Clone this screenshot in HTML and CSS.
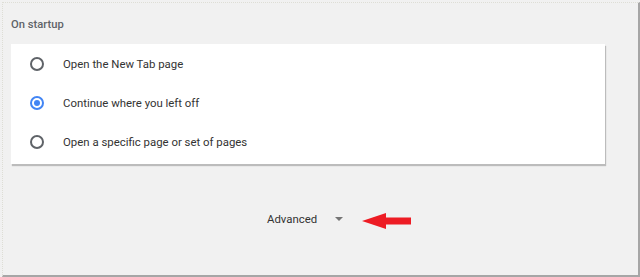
FILE: index.html
```html
<!DOCTYPE html>
<html lang="en">
<head>
    <meta charset="UTF-8">
    <title>Settings - On startup</title>
    <link rel="stylesheet" href="styles.css">
</head>
<body>
    <div class="frame">
        <h2 class="section_title">On startup</h2>
        <div class="card">
            <label class="option">
                <span class="radio"></span>
                <span>Open the New Tab page</span>
            </label>
            <label class="option">
                <span class="radio checked"></span>
                <span>Continue where you left off</span>
            </label>
            <label class="option">
                <span class="radio"></span>
                <span>Open a specific page or set of pages</span>
            </label>
        </div>
        <div class="advanced">
            <span class="adv_text">Advanced</span>
            <span class="caret"></span>
            <svg class="arrow" width="50" height="18" viewBox="0 0 50 18">
                <polygon points="0,9 24,1 24,5.5 49,5.5 49,12.5 24,12.5 24,17" fill="#ed1c24"/>
            </svg>
        </div>
    </div>
</body>
</html>
```

FILE: styles.css
```css
* {
    margin: 0px;
    padding: 0px;
    box-sizing: border-box;
}

body {
    width: 640px;
    height: 277px;
    background-color: #f1f1f1;
    font-family: Roboto, "Liberation Sans", Arial, sans-serif;
    overflow: hidden;
}

.frame {
    margin: 2px 0 0 2px;
    width: 638px;
    height: 275px;
    border-top: 1px dotted #deded6;
    border-left: 1px dotted #deded6;
    border-right: 2px solid #a6a6a6;
    border-bottom: 2px solid #a6a6a6;
    padding: 13px 0 0 8px;
}

.section_title {
    font-size: 11.2px;
    font-weight: 500;
    color: #5f6368;
    line-height: 18px;
    margin-bottom: 10px;
}

.card {
    width: 594px;
    height: 120px;
    background-color: #fff;
    box-shadow: 1px 2px 1px rgba(0, 0, 0, 0.22);
}

.option {
    display: flex;
    align-items: center;
    height: 39px;
    padding-left: 19px;
    font-size: 11.4px;
    color: #333;
}

.radio {
    width: 14px;
    height: 14px;
    border: 2px solid #5f6368;
    border-radius: 50%;
    margin-right: 19px;
    position: relative;
}

.radio.checked {
    border-color: #4285f4;
}

.radio.checked::after {
    content: "";
    position: absolute;
    left: 2px;
    top: 2px;
    width: 6px;
    height: 6px;
    border-radius: 50%;
    background-color: #4285f4;
}

.advanced {
    display: flex;
    align-items: center;
    margin-top: 44px;
    padding-left: 256px;
    font-size: 11.4px;
    color: #333;
}

.caret {
    width: 0;
    height: 0;
    border-left: 4px solid transparent;
    border-right: 4px solid transparent;
    border-top: 4px solid #757575;
    margin-left: 18px;
    margin-right: 19px;
}

.arrow {
    margin-top: 4px;
}
```
